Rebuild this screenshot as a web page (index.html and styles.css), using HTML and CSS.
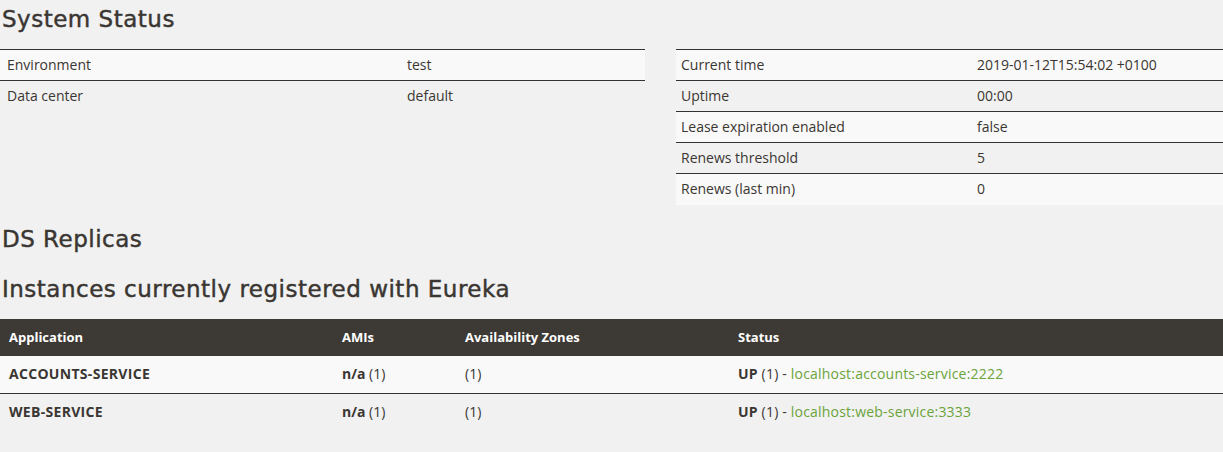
FILE: index.html
```html
<!DOCTYPE html>
<html>
<head>
<meta charset="utf-8">
<link rel="stylesheet" href="styles.css">
</head>
<body>
<h1 class="title first">System Status</h1>
<div class="status-row">
  <table class="info left">
    <tbody>
      <tr class="odd"><td class="k1">Environment</td><td>test</td></tr>
      <tr><td class="k1">Data center</td><td>default</td></tr>
    </tbody>
  </table>
  <table class="info right">
    <tbody>
      <tr class="odd"><td class="k2">Current time</td><td>2019-01-12T15:54:02 +0100</td></tr>
      <tr><td class="k2">Uptime</td><td>00:00</td></tr>
      <tr class="odd"><td class="k2">Lease expiration enabled</td><td>false</td></tr>
      <tr><td class="k2">Renews threshold</td><td>5</td></tr>
      <tr class="odd"><td class="k2">Renews (last min)</td><td>0</td></tr>
    </tbody>
  </table>
</div>
<h2 class="title after-status">DS Replicas</h2>
<h2 class="title">Instances currently registered with Eureka</h2>
<table class="instances">
  <thead>
    <tr><th class="c-app">Application</th><th class="c-ami">AMIs</th><th class="c-az">Availability Zones</th><th>Status</th></tr>
  </thead>
  <tbody>
    <tr class="odd"><td class="app">ACCOUNTS-SERVICE</td><td><b>n/a</b> (1)</td><td>(1)</td><td class="st"><b>UP</b> (1) - <a href="#">localhost:accounts-service:2222</a></td></tr>
    <tr class="sep"><td class="app">WEB-SERVICE</td><td><b>n/a</b> (1)</td><td>(1)</td><td class="st"><b>UP</b> (1) - <a href="#">localhost:web-service:3333</a></td></tr>
  </tbody>
</table>
</body>
</html>
```
FILE: styles.css
```css
html, body {
  margin: 0;
  padding: 0;
  background: #f1f1f1;
  color: #3a3632;
  font-family: "Open Sans", "Noto Sans", sans-serif;
  font-size: 14px;
}

.title {
  font-family: "DejaVu Sans", "Noto Sans", sans-serif;
  font-weight: 500;
  font-size: 23px;
  line-height: 30px;
  letter-spacing: 0.5px;
  -webkit-text-stroke: 0.45px #3a3632;
  margin: 20px 0 15px 2px;
  color: #3a3632;
}

.title.first {
  margin-top: 4px;
}

.title.after-status {
  margin-top: 19px;
}

.status-row {
  display: flex;
  justify-content: space-between;
  align-items: flex-start;
}

table {
  border-collapse: collapse;
  border-spacing: 0;
}

.info.left { width: 645px; }
.info.right { width: 547px; }

.info td {
  border-top: 1px solid #333;
  height: 31px;
  padding: 0 6px 0 7px;
  line-height: 20px;
  vertical-align: middle;
  box-sizing: border-box;
}

.info.right td.k2 { padding-left: 5px; }

.info td.k1 { width: 400px; }
.info td.k2 { width: 294px; }

tr.odd { background: #f9f9f9; }

.instances {
  width: 100%;
}

.instances th {
  background: #3d3935;
  color: #fff;
  text-align: left;
  font-weight: 700;
  font-size: 13px;
  height: 37px;
  padding: 0 8px 0 9px;
  vertical-align: middle;
}

.instances th.c-app { width: 316px; }
.instances th.c-ami { width: 106px; }
.instances th.c-az { width: 256px; }

.instances td {
  height: 37px;
  padding: 0 8px 0 9px;
  vertical-align: middle;
  line-height: 20px;
}

.instances tr.sep td { border-top: 1px solid #333; }

.instances td.app { font-weight: 700; letter-spacing: 0.3px; }
.instances td.st { letter-spacing: 0.2px; }
.instances b { font-weight: 700; }

a {
  color: #6aa33a;
  text-decoration: none;
}
```
